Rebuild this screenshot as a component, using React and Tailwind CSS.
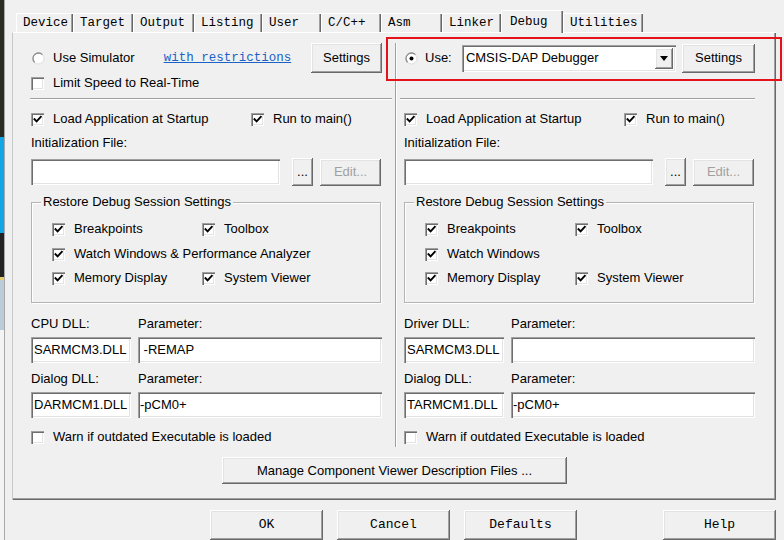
import React from "react";

const SANS = "font-['Liberation_Sans',Arial,sans-serif]";
const MONO = "font-['Liberation_Mono','Courier_New',monospace]";
const RAISED =
  "bg-[#f0f0f0] shadow-[inset_-1px_-1px_0_#696969,inset_1px_1px_0_#ffffff,inset_-2px_-2px_0_#a0a0a0,inset_2px_2px_0_#e3e3e3]";
const SUNKEN =
  "bg-white shadow-[inset_1px_1px_0_#a0a0a0,inset_2px_2px_0_#6e6e6e,inset_-1px_-1px_0_#ffffff,inset_-2px_-2px_0_#e3e3e3]";

function Box({ checked }) {
  return (
    <span className={"relative block w-[13px] h-[13px] shrink-0 " + SUNKEN}>
      {checked && (
        <svg className="absolute inset-0" width="13" height="13" viewBox="0 0 13 13">
          <path d="M3.5 6.2 L5.6 8.4 L9.8 3.8" stroke="#000" strokeWidth="1.9" fill="none" strokeLinecap="square" />
        </svg>
      )}
    </span>
  );
}

function Radio({ checked }) {
  return (
    <svg width="13" height="13" viewBox="0 0 13 13" className="block shrink-0">
      <circle cx="6.5" cy="6.5" r="5.5" fill="#fff" stroke="#dcdcdc" strokeWidth="1" />
      <path d="M2.6 10.4 A5.5 5.5 0 0 1 10.4 2.6" stroke="#8a8a8a" strokeWidth="1.3" fill="none" />
      {checked && <circle cx="6.5" cy="6.5" r="2" fill="#000" />}
    </svg>
  );
}

function Check({ checked, label, className = "" }) {
  return (
    <div className={"flex items-center h-[16px] " + className}>
      <Box checked={checked} />
      <span className="ml-[9px] whitespace-nowrap leading-[16px]">{label}</span>
    </div>
  );
}

function Btn({ className = "", children }) {
  return (
    <div className={"flex items-center justify-center shrink-0 whitespace-nowrap " + RAISED + " " + className}>
      {children}
    </div>
  );
}

function InitRow() {
  return (
    <>
      <div className="mt-[8px] h-[16px] leading-[16px]">Initialization File:</div>
      <div className="flex items-center h-[28px] mt-[7px]">
        <div className={"w-[249px] h-[26px] " + SUNKEN} />
        <Btn className="ml-[12px] w-[21px] h-[28px]">...</Btn>
        <Btn className="ml-[7px] w-[61px] h-[27px] text-[#a0a0a0]">Edit...</Btn>
      </div>
    </>
  );
}

function Group({ watch }) {
  return (
    <div className="relative mt-[16px] h-[101px] w-[350px] border border-[#b4b4b4] shadow-[inset_1px_1px_0_#ffffff,1px_1px_0_#ffffff] pl-[20px] pt-[18px]">
      <span className="absolute -top-[9px] left-[9px] px-[2px] bg-[#f0f0f0] leading-[16px]">
        Restore Debug Session Settings
      </span>
      <div className="flex">
        <Check checked label="Breakpoints" className="w-[150px]" />
        <Check checked label="Toolbox" />
      </div>
      <Check checked className="mt-[9px]" label={watch} />
      <div className="flex mt-[8px]">
        <Check checked label="Memory Display" className="w-[150px]" />
        <Check checked label="System Viewer" />
      </div>
    </div>
  );
}

function Dll({ label, value, param, className = "" }) {
  return (
    <>
      <div className={"flex h-[16px] leading-[16px] " + className}>
        <span className="w-[107px]">{label}</span>
        <span>Parameter:</span>
      </div>
      <div className="flex mt-[5px] h-[26px]">
        <div className={"w-[100px] h-[26px] pl-[3px] flex items-center whitespace-nowrap overflow-hidden " + SUNKEN}>
          {value}
        </div>
        <div className={"ml-[7px] flex-1 h-[26px] pl-[2px] flex items-center whitespace-pre " + SUNKEN}>{param}</div>
      </div>
    </>
  );
}

function LeftCol() {
  return (
    <div className="flex flex-col w-[351px]">
      <div className="flex items-center h-[30px]">
        <span className="ml-[1px]">
          <Radio />
        </span>
        <span className="ml-[8px]">Use Simulator</span>
        <span className={"ml-[29px] text-[12.5px] underline text-[#1a62c6] " + MONO}>with restrictions</span>
        <Btn className="ml-auto w-[71px] h-[30px]">Settings</Btn>
      </div>
      <Check className="mt-[2px]" label="Limit Speed to Real-Time" />
      <div className="mt-[7px] ml-[-1px] mr-[-10px] h-[2px] border-t border-b border-t-[#a0a0a0] border-b-white" />
      <div className="flex mt-[11px]">
        <Check checked label="Load Application at Startup" className="w-[220px]" />
        <Check checked label="Run to main()" />
      </div>
      <InitRow />
      <Group watch="Watch Windows & Performance Analyzer" />
      <Dll className="mt-[13px]" label="CPU DLL:" value="SARMCM3.DLL" param=" -REMAP" />
      <Dll className="mt-[8px]" label="Dialog DLL:" value="DARMCM1.DLL" param="-pCM0+" />
      <Check className="mt-[11px]" label="Warn if outdated Executable is loaded" />
    </div>
  );
}

function RightCol() {
  return (
    <div className="flex flex-col w-[351px]">
      <div className="flex items-center h-[30px]">
        <span className="ml-[1px]">
          <Radio checked />
        </span>
        <span className="ml-[7px] w-[30px]">Use:</span>
        <div className={"ml-[7px] w-[215px] h-[27px] flex items-center pl-[4px] pr-[3px] " + SUNKEN}>
          <span className="flex-1 whitespace-nowrap">CMSIS-DAP Debugger</span>
          <div className={"w-[18px] h-[21px] flex items-center justify-center " + RAISED}>
            <svg width="8" height="5" viewBox="0 0 8 5">
              <path d="M0 0 H8 L4 5 Z" fill="#000" />
            </svg>
          </div>
        </div>
        <Btn className="ml-[6px] w-[73px] h-[29px]">Settings</Btn>
      </div>
      <div className="mt-[2px] h-[16px]" />
      <div className="mt-[7px] ml-[-4px] h-[2px] border-t border-b border-t-[#a0a0a0] border-b-white" />
      <div className="flex mt-[11px]">
        <Check checked label="Load Application at Startup" className="w-[220px]" />
        <Check checked label="Run to main()" />
      </div>
      <InitRow />
      <Group watch="Watch Windows" />
      <Dll className="mt-[13px]" label="Driver DLL:" value="SARMCM3.DLL" param="" />
      <Dll className="mt-[8px]" label="Dialog DLL:" value="TARMCM1.DLL" param="-pCM0+" />
      <Check className="mt-[11px]" label="Warn if outdated Executable is loaded" />
    </div>
  );
}

const TABS = [
  ["Device", "w-[57px]"],
  ["Target", "w-[60px]"],
  ["Output", "w-[61px]"],
  ["Listing", "w-[68px]"],
  ["User", "w-[59px]"],
  ["C/C++", "w-[60px]"],
  ["Asm", "w-[61px]"],
  ["Linker", "w-[59px]"],
  ["Debug", "w-[62px]", true],
  ["Utilities", "w-[80px]"],
];

export default function App() {
  return (
    <div className={"relative flex w-[784px] h-[540px] overflow-hidden bg-[#f0f0f0] text-[13px] text-black " + SANS}>
      <div className="flex flex-col w-[4px] shrink-0">
        <div className="h-[137px] bg-[#2d2c22]" />
        <div className="h-[96px] bg-[#13a6e6]" />
        <div className="h-[44px] bg-[#222222]" />
        <div className="h-[3px] bg-[#e6cc6a]" />
        <div className="h-[50px] bg-[#bccbd8]" />
        <div className="flex-1 bg-[#f4f4f4]" />
      </div>
      <div className="flex-1 flex flex-col border-l border-[#a8a8a8] pl-[7px] pt-[10px]">
        <div className={"relative z-10 flex items-end h-[22px] ml-[4px] text-[12.5px] " + MONO}>
          {TABS.map(([t, w, sel]) =>
            sel ? (
              <div
                key={t}
                className={
                  w +
                  " h-[23px] -mb-px flex items-center pl-[8px] bg-[#f0f0f0] border-t border-l border-white shadow-[inset_-1px_0_0_#696969,inset_-2px_0_0_#a0a0a0]"
                }
              >
                {t}
              </div>
            ) : (
              <div
                key={t}
                className={
                  w +
                  " h-[19px] flex items-center pl-[6px] border-t border-l border-white shadow-[inset_-1px_0_0_#696969,inset_-2px_0_0_#a0a0a0]"
                }
              >
                {t}
              </div>
            )
          )}
        </div>
        <div className="flex flex-col w-[764px] h-[470px] border-t border-l border-t-white border-l-[#c8c8c8] shadow-[inset_-1px_-1px_0_#696969,inset_-2px_-2px_0_#a0a0a0] pt-[10px]">
          <div className="flex">
            <div className="w-[382px] pl-[18px] pb-[2px]">
              <LeftCol />
            </div>
            <div className="w-[2px] border-l border-r border-l-[#a0a0a0] border-r-white" />
            <div className="pl-[7px]">
              <RightCol />
            </div>
          </div>
          <Btn className="mx-auto mt-[10px] w-[345px] h-[27px]">Manage Component Viewer Description Files ...</Btn>
        </div>
        <div className={"flex mt-[10px] ml-[198px] " + MONO}>
          <Btn className="w-[113px] h-[30px]">OK</Btn>
          <Btn className="ml-[14px] w-[113px] h-[30px]">Cancel</Btn>
          <Btn className="ml-[14px] w-[113px] h-[30px]">Defaults</Btn>
          <Btn className="ml-[86px] w-[113px] h-[30px]">Help</Btn>
        </div>
      </div>
      <div className="absolute left-[386px] top-[37px] w-[396px] h-[44px] border-2 border-[#e5121a]" />
    </div>
  );
}
